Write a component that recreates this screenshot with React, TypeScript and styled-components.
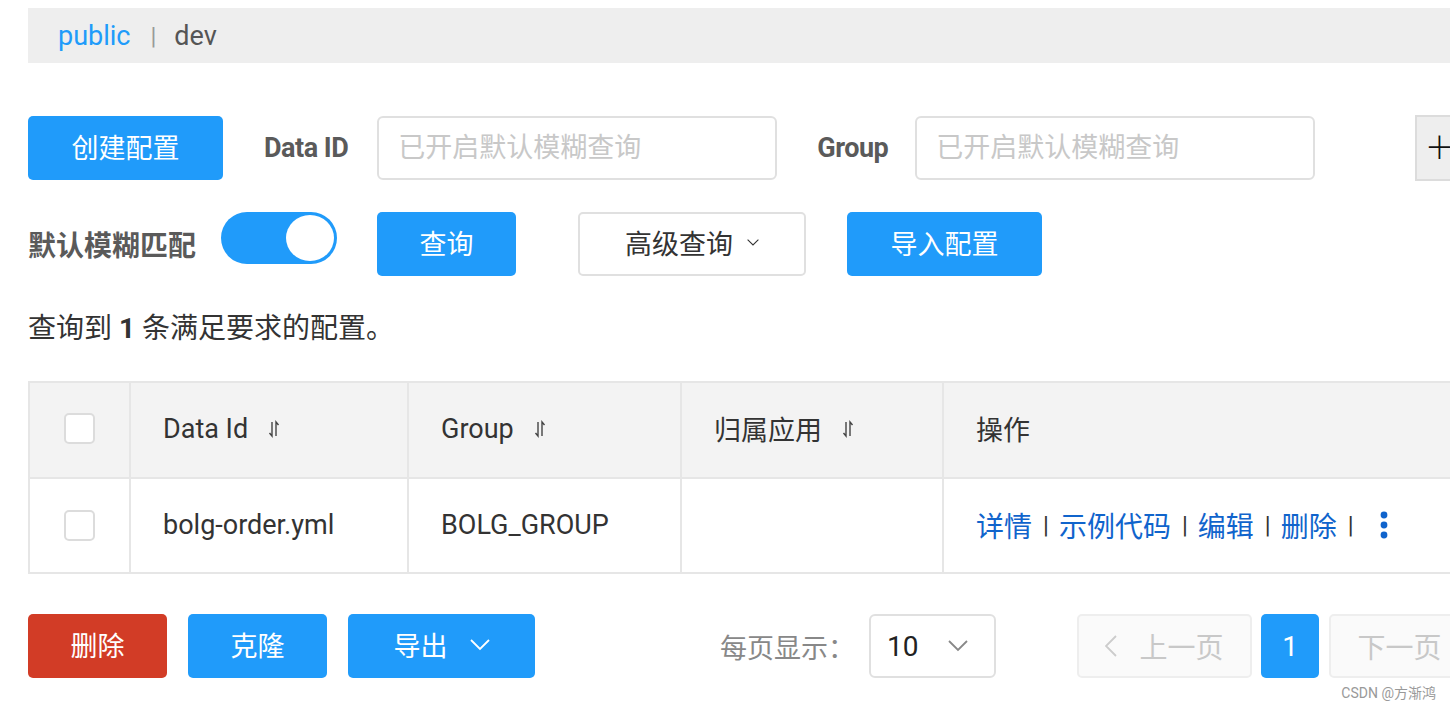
import styled, { createGlobalStyle } from 'styled-components';
import { Fragment } from 'react';

const BLUE = '#209bfa';

const SortIcon = () => (
    <svg width="12" height="18" viewBox="0 0 12 18" fill="none" stroke="#444" strokeWidth="1.4">
        <path d="M4 2 V16 L1.5 13" />
        <path d="M8 16 V2 L10.5 5" />
    </svg>
);

const Chevron = ({ size, color }: { size: number; color: string }) => (
    <svg width={size} height={size * 0.6} viewBox="0 0 20 12" fill="none" stroke={color} strokeWidth="1.8">
        <path d="M1 1 L10 10 L19 1" />
    </svg>
);

const SideChevron = ({ right }: { right?: boolean }) => (
    <svg width="12" height="22" viewBox="0 0 12 22" fill="none" stroke="#ccc" strokeWidth="1.8">
        <path d={right ? 'M1 1 L11 11 L1 21' : 'M11 1 L1 11 L11 21'} />
    </svg>
);

const MoreDots = () => (
    <svg width="8" height="28" viewBox="0 0 8 28" fill="#1064cc">
        <circle cx="4" cy="4" r="3.4" />
        <circle cx="4" cy="14" r="3.4" />
        <circle cx="4" cy="24" r="3.4" />
    </svg>
);

const App = () => {
    const columns = ['Data Id', 'Group', '归属应用'];

    return (
    <Fragment>
        <GlobalStyle />
        <Page>
            <Breadcrumb>
                <Crumb active>public</Crumb>
                <CrumbSep>|</CrumbSep>
                <Crumb>dev</Crumb>
            </Breadcrumb>

            <Toolbar top={53}>
                <Button width={195}>创建配置</Button>
                <Label ml={41}>Data ID</Label>
                <Input ml={29} placeholder="已开启默认模糊查询" />
                <Label ml={40}>Group</Label>
                <Input ml={27} placeholder="已开启默认模糊查询" />
                <PlusButton>+</PlusButton>
            </Toolbar>

            <Toolbar top={32}>
                <Label cjk>默认模糊匹配</Label>
                <Switch>
                    <Knob />
                </Switch>
                <Button width={139} ml={40}>查询</Button>
                <GhostButton>
                    高级查询
                    <Chevron size={12} color="#333" />
                </GhostButton>
                <Button width={195} ml={41}>导入配置</Button>
            </Toolbar>

            <Summary>
                查询到 <strong>1</strong> 条满足要求的配置。
            </Summary>

            <Table>
                <colgroup>
                    <col style={{ width: 101 }} />
                    <col style={{ width: 278 }} />
                    <col style={{ width: 273 }} />
                    <col style={{ width: 262 }} />
                    <col />
                </colgroup>
                <thead>
                    <tr>
                        <HeadCell center><Checkbox /></HeadCell>
                        {columns.map(col => (
                            <HeadCell key={col}>
                                <HeadInner>
                                    {col}
                                    <SortIcon />
                                </HeadInner>
                            </HeadCell>
                        ))}
                        <HeadCell>操作</HeadCell>
                    </tr>
                </thead>
                <tbody>
                    <tr>
                        <Cell center><Checkbox /></Cell>
                        <Cell>bolg-order.yml</Cell>
                        <Cell>BOLG_GROUP</Cell>
                        <Cell></Cell>
                        <Cell>
                            <Actions>
                                <Link>详情</Link>
                                <Sep>|</Sep>
                                <Link>示例代码</Link>
                                <Sep>|</Sep>
                                <Link>编辑</Link>
                                <Sep>|</Sep>
                                <Link>删除</Link>
                                <Sep>|</Sep>
                                <More>
                                    <MoreDots />
                                </More>
                            </Actions>
                        </Cell>
                    </tr>
                </tbody>
            </Table>

            <Footer>
                <Button width={139} danger>删除</Button>
                <Button width={139} ml={21}>克隆</Button>
                <Button width={187} ml={21}>
                    导出
                    <Chevron size={20} color="#fff" />
                </Button>
                <PageSizeLabel>每页显示：</PageSizeLabel>
                <Select>
                    10
                    <Chevron size={20} color="#888" />
                </Select>
                <PagerButton width={175} ml={81}>
                    <SideChevron />
                    上一页
                </PagerButton>
                <PageNumber>1</PageNumber>
                <PagerButton width={175} ml={10}>
                    下一页
                    <SideChevron right />
                </PagerButton>
            </Footer>
        </Page>
        <Watermark>CSDN @方渐鸿</Watermark>
    </Fragment>
    );
};

const GlobalStyle = createGlobalStyle`
    * {
        padding: 0;
        margin: 0;
        box-sizing: border-box;
    }

    body {
        background-color: #fff;
        overflow: hidden;
        font-family: Roboto, "Noto Sans CJK SC", sans-serif;
        color: #333;
    }
`;

const Page = styled.div`
    width: 1600px;
    padding: 8px 0 0 28px;
`;

const Breadcrumb = styled.div`
    height: 55px;
    background-color: #eeeeee;
    display: flex;
    align-items: center;
    padding-left: 30px;
    font-size: 27px;
`;

const Crumb = styled.span<{ active?: boolean }>`
    color: ${p => (p.active ? BLUE : '#555')};
`;

const CrumbSep = styled.span`
    color: #999;
    font-size: 24px;
    margin: 0 18px 0 20px;
`;

const Toolbar = styled.div<{ top: number }>`
    display: flex;
    align-items: center;
    height: 64px;
    margin-top: ${p => p.top}px;
`;

const Button = styled.button<{ width: number; ml?: number; danger?: boolean }>`
    width: ${p => p.width}px;
    height: 64px;
    margin-left: ${p => p.ml || 0}px;
    border: none;
    border-radius: 5px;
    background-color: ${p => (p.danger ? '#d23c26' : BLUE)};
    color: #fff;
    font-family: inherit;
    font-size: 27px;
    display: flex;
    align-items: center;
    justify-content: center;
    gap: 22px;
    padding-bottom: 3px;
`;

const Label = styled.span<{ ml?: number; cjk?: boolean }>`
    margin-left: ${p => p.ml || 0}px;
    font-size: ${p => (p.cjk ? 28 : 27)}px;
    font-weight: bold;
    color: #5a5a5a;
    letter-spacing: ${p => (p.cjk ? 0 : -0.5)}px;
`;

const Input = styled.input<{ ml?: number }>`
    width: 400px;
    height: 64px;
    margin-left: ${p => p.ml || 0}px;
    border: 2px solid #e0e0e0;
    border-radius: 6px;
    padding-left: 19px;
    font-family: inherit;
    font-size: 27px;
    outline: none;

    &::placeholder {
        color: #c8c8c8;
    }
`;

const PlusButton = styled.div`
    width: 80px;
    height: 66px;
    margin-left: 100px;
    background-color: #eeeeee;
    border: 2px solid #dcdcdc;
    font-size: 44px;
    font-weight: 200;
    color: #111;
    padding-left: 10px;
    line-height: 60px;
`;

const Switch = styled.div`
    width: 116px;
    height: 52px;
    margin-left: 25px;
    margin-top: -12px;
    border-radius: 26px;
    background-color: ${BLUE};
    display: flex;
    align-items: center;
    justify-content: flex-end;
    padding-right: 3px;
`;

const Knob = styled.div`
    width: 48px;
    height: 46px;
    border-radius: 50%;
    background-color: #fff;
`;

const GhostButton = styled.div`
    width: 228px;
    height: 64px;
    margin-left: 62px;
    border: 2px solid #e0e0e0;
    border-radius: 5px;
    display: flex;
    align-items: center;
    justify-content: center;
    gap: 14px;
    font-size: 27px;
    color: #333;
    padding-bottom: 3px;
`;

const Summary = styled.div`
    margin-top: 33px;
    height: 40px;
    line-height: 40px;
    font-size: 28px;
    color: #333;

    strong {
        font-weight: bold;
    }
`;

const Table = styled.table`
    margin-top: 32px;
    width: 1560px;
    border-collapse: collapse;
    table-layout: fixed;
    font-size: 27px;
`;

const HeadCell = styled.th<{ center?: boolean }>`
    height: 96px;
    background-color: #f3f3f3;
    border: 2px solid #e6e6e6;
    text-align: ${p => (p.center ? 'center' : 'left')};
    padding-left: ${p => (p.center ? 0 : 32)}px;
    padding-bottom: 3px;
    font-weight: normal;
    color: #333;
`;

const HeadInner = styled.div`
    display: flex;
    align-items: center;
    gap: 20px;
`;

const Cell = styled.td<{ center?: boolean }>`
    height: 95px;
    border: 2px solid #e6e6e6;
    text-align: ${p => (p.center ? 'center' : 'left')};
    padding-left: ${p => (p.center ? 0 : 32)}px;
    padding-bottom: 1px;
    color: #333;
`;

const Checkbox = styled.div`
    width: 31px;
    height: 31px;
    margin: 0 auto;
    border: 2px solid #dcdcdc;
    border-radius: 5px;
    background: #fff;
`;

const Actions = styled.div`
    display: flex;
    align-items: center;
    font-size: 28px;
`;

const Link = styled.span`
    color: #1064cc;
`;

const Sep = styled.span`
    color: #333;
    font-size: 24px;
    margin: 0 10px 0 11px;
`;

const More = styled.span`
    display: flex;
    margin-left: 16px;
`;

const Footer = styled.div`
    display: flex;
    align-items: center;
    height: 64px;
    margin-top: 40px;
`;

const PageSizeLabel = styled.span`
    margin-left: 185px;
    font-size: 27px;
    color: #888;
`;

const Select = styled.div`
    width: 127px;
    height: 64px;
    margin-left: 14px;
    border: 2px solid #e0e0e0;
    border-radius: 6px;
    display: flex;
    align-items: center;
    justify-content: space-between;
    padding: 0 26px 0 16px;
    font-size: 28px;
    color: #222;
`;

const PagerButton = styled.div<{ width: number; ml: number }>`
    width: ${p => p.width}px;
    height: 64px;
    margin-left: ${p => p.ml}px;
    background-color: #fafafa;
    border: 2px solid #eeeeee;
    border-radius: 5px;
    display: flex;
    align-items: center;
    justify-content: center;
    gap: 22px;
    font-size: 28px;
    color: #c8c8c8;
`;

const PageNumber = styled.div`
    width: 58px;
    height: 64px;
    margin-left: 9px;
    border-radius: 5px;
    background-color: ${BLUE};
    color: #fff;
    font-size: 28px;
    display: flex;
    align-items: center;
    justify-content: center;
`;

const Watermark = styled.div`
    position: absolute;
    right: 14px;
    top: 682px;
    font-size: 14px;
    color: #999;
`;

export default App;
